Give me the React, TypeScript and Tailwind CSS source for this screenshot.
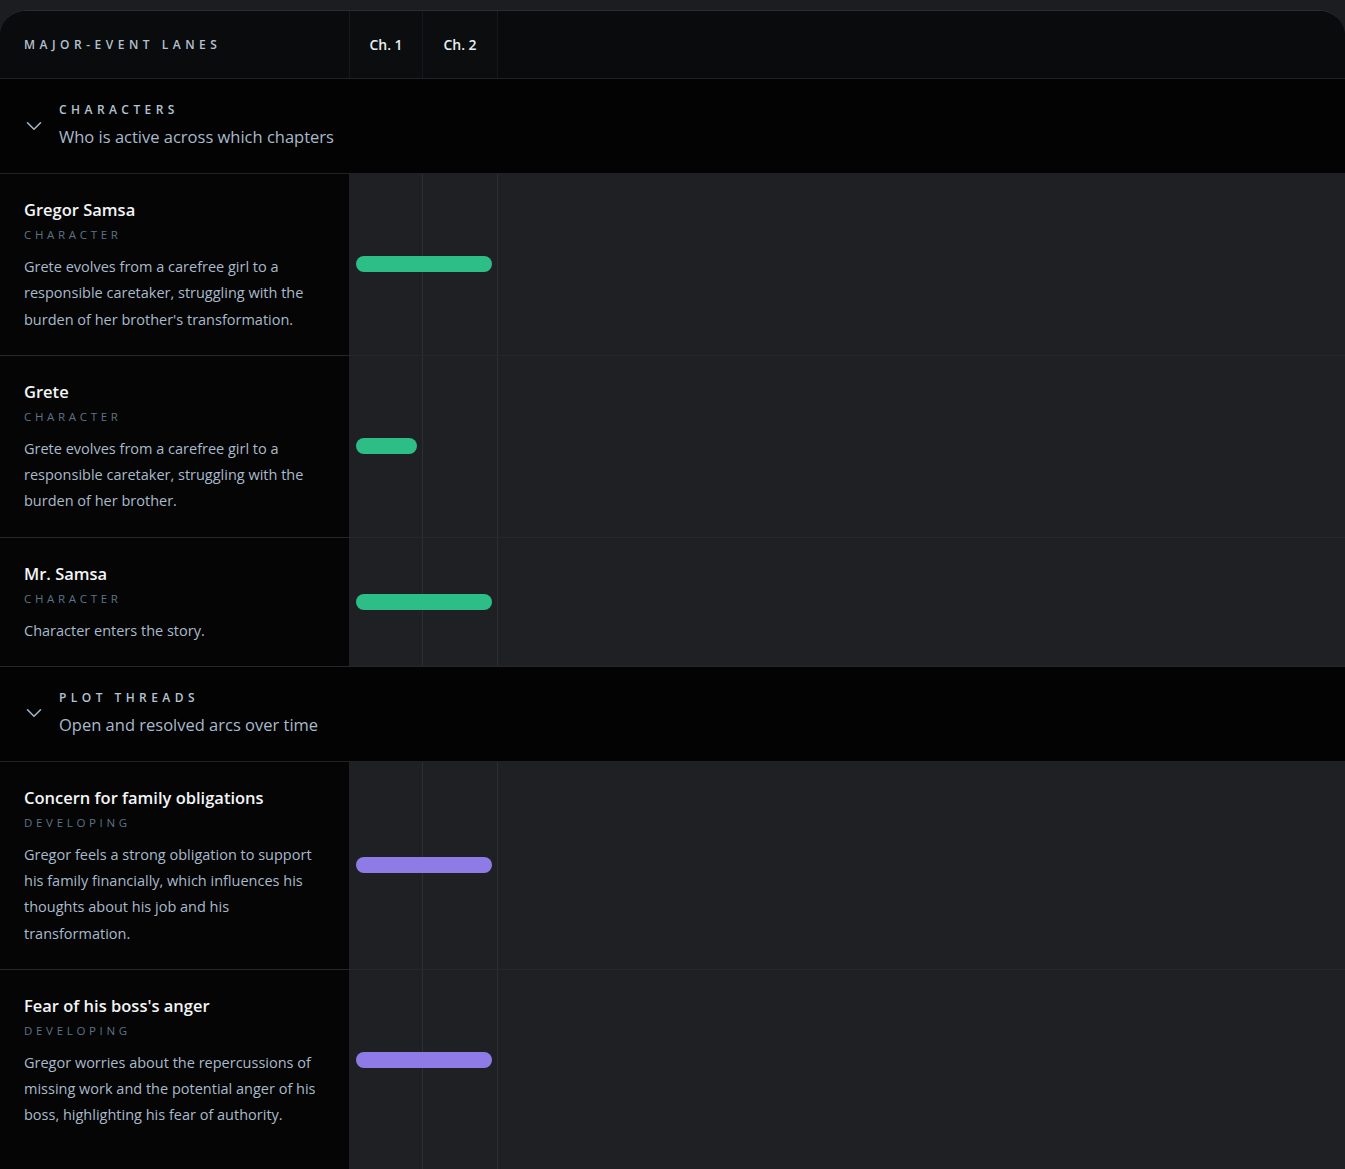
import { ChevronDown } from "lucide-react";

type Lane = {
  name: string;
  label: string;
  text: string;
  span: 1 | 2;
  tone: "green" | "purple";
};

type Section = {
  title: string;
  subtitle: string;
  lanes: Lane[];
};

const SECTIONS: Section[] = [
  {
    title: "Characters",
    subtitle: "Who is active across which chapters",
    lanes: [
      {
        name: "Gregor Samsa",
        label: "Character",
        text: "Grete evolves from a carefree girl to a responsible caretaker, struggling with the burden of her brother's transformation.",
        span: 2,
        tone: "green",
      },
      {
        name: "Grete",
        label: "Character",
        text: "Grete evolves from a carefree girl to a responsible caretaker, struggling with the burden of her brother.",
        span: 1,
        tone: "green",
      },
      {
        name: "Mr. Samsa",
        label: "Character",
        text: "Character enters the story.",
        span: 2,
        tone: "green",
      },
    ],
  },
  {
    title: "Plot threads",
    subtitle: "Open and resolved arcs over time",
    lanes: [
      {
        name: "Concern for family obligations",
        label: "Developing",
        text: "Gregor feels a strong obligation to support his family financially, which influences his thoughts about his job and his transformation.",
        span: 2,
        tone: "purple",
      },
      {
        name: "Fear of his boss's anger",
        label: "Developing",
        text: "Gregor worries about the repercussions of missing work and the potential anger of his boss, highlighting his fear of authority.",
        span: 2,
        tone: "purple",
      },
    ],
  },
];

function LaneGrid({ children }: { children?: React.ReactNode }) {
  return (
    <div className="grid flex-1 grid-cols-[74px_75px_1fr] bg-[#1e2024]">
      <div className="col-start-1 row-start-1 border-r border-[#2b2e33]" />
      <div className="col-start-2 row-start-1 border-r border-[#2b2e33]" />
      <div className="col-start-3 row-start-1" />
      {children}
    </div>
  );
}

function LaneRow({ lane, last }: { lane: Lane; last: boolean }) {
  const bar = lane.tone === "green" ? "bg-[#2dbd87]" : "bg-[#8f7be6]";
  const span = lane.span === 2 ? "col-span-2" : "col-span-1";

  return (
    <div className={last ? "flex" : "flex border-b border-[#24272b]"}>
      <div className="w-[349px] shrink-0 bg-[#050505] px-6 pt-6 pb-[22px]">
        <h3 className="text-[16.5px] font-semibold leading-6 text-[#f3f5f7]">
          {lane.name}
        </h3>
        <p className="mt-[5px] text-[11.5px] uppercase leading-4 tracking-[0.32em] text-[#5e7287]">
          {lane.label}
        </p>
        <p className="mt-[11px] text-[14.5px] leading-[26.25px] text-[#a9bacb]">
          {lane.text}
        </p>
      </div>
      <LaneGrid>
        <div
          className={`col-start-1 row-start-1 ml-[7px] mr-[6px] h-4 self-center rounded-full ${span} ${bar}`}
        />
      </LaneGrid>
    </div>
  );
}

function SectionHeader({ section }: { section: Section }) {
  return (
    <div className="flex items-center gap-3 border-b border-[#1f2226] bg-[#030303] pt-[23px] pb-6 pl-[21px]">
      <ChevronDown className="h-[26px] w-[26px] text-[#9fb2c4]" strokeWidth={1.5} />
      <div>
        <p className="text-[12px] font-semibold uppercase leading-4 tracking-[0.37em] text-[#b4c3d2]">
          {section.title}
        </p>
        <p className="mt-[7px] text-[16.5px] leading-6 text-[#a8bacb]">
          {section.subtitle}
        </p>
      </div>
    </div>
  );
}

export default function App() {
  return (
    <div className="flex min-h-screen flex-col bg-[#1b1d20] pt-[10px] font-['Open_Sans',sans-serif]">
      <div className="flex flex-1 flex-col overflow-hidden rounded-t-[26px] border-t border-[#2a2d31] bg-[#050505]">
        <div className="flex h-[68px] border-b border-[#1f2226] bg-[#0a0b0c]">
          <div className="flex w-[349px] shrink-0 items-center px-6">
            <p className="text-[12px] font-semibold uppercase tracking-[0.375em] text-[#b3c2d1]">
              Major-event lanes
            </p>
          </div>
          <div className="grid flex-1 grid-cols-[74px_75px_1fr]">
            <div className="flex items-center justify-center border-x border-[#16181b] bg-[#0c0d0e] text-sm font-semibold text-[#e8eef4]">
              Ch. 1
            </div>
            <div className="flex items-center justify-center border-r border-[#16181b] bg-[#0c0d0e] text-sm font-semibold text-[#e8eef4]">
              Ch. 2
            </div>
            <div />
          </div>
        </div>

        {SECTIONS.map((section, si) => (
          <div key={section.title}>
            <SectionHeader section={section} />
            {section.lanes.map((lane, li) => (
              <LaneRow
                key={lane.name}
                lane={lane}
                last={si === SECTIONS.length - 1 && li === section.lanes.length - 1}
              />
            ))}
          </div>
        ))}

        <div className="flex flex-1">
          <div className="w-[349px] shrink-0 bg-[#050505]" />
          <LaneGrid />
        </div>
      </div>
    </div>
  );
}
